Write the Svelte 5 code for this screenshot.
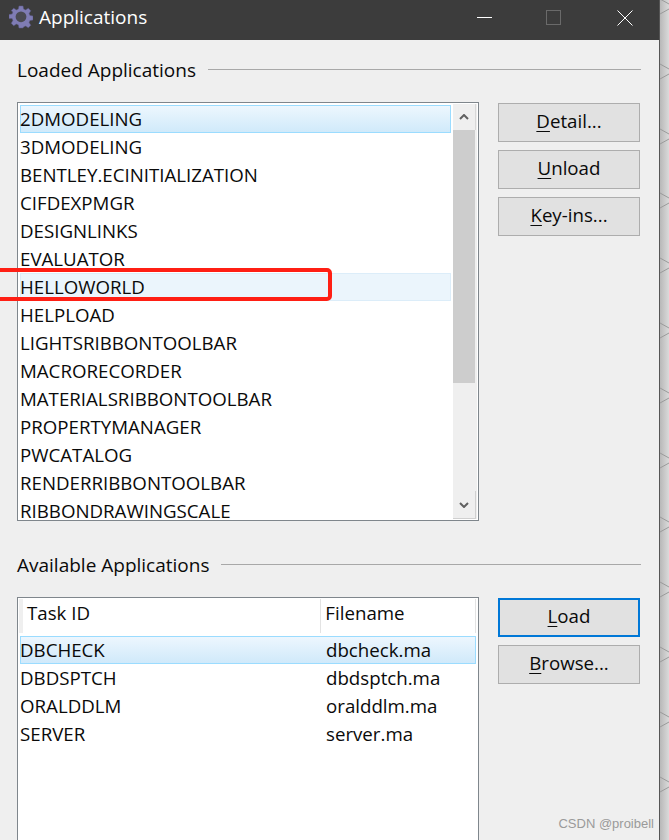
<script>
  // Applications dialog
  const loaded = [
    '2DMODELING', '3DMODELING', 'BENTLEY.ECINITIALIZATION', 'CIFDEXPMGR', 'DESIGNLINKS',
    'EVALUATOR', 'HELLOWORLD', 'HELPLOAD', 'LIGHTSRIBBONTOOLBAR', 'MACRORECORDER',
    'MATERIALSRIBBONTOOLBAR', 'PROPERTYMANAGER', 'PWCATALOG', 'RENDERRIBBONTOOLBAR',
    'RIBBONDRAWINGSCALE'
  ];
  const available = [
    ['DBCHECK', 'dbcheck.ma'],
    ['DBDSPTCH', 'dbdsptch.ma'],
    ['ORALDDLM', 'oralddlm.ma'],
    ['SERVER', 'server.ma']
  ];
  const selected = '2DMODELING';
  const hovered = 'HELLOWORLD';
  // wallpaper scratches on the strip right of the window
  const marks = Array.from({ length: 13 }, (_, i) => Math.round(-1 + i * 64.8));
</script>

<div class="screen">
  <div class="window">
    <header class="titlebar">
      <svg class="app-icon" viewBox="0 0 24 24" width="24" height="24">
        <path fill="#7f7cb4" stroke="#5d5a8a" stroke-width="0.5" d="M10 1h4l.6 3.100 2 .8L19.300 3.200l2.500 2.500-1.700 2.700.8 2 3.100.6v4l-3.100.6-.8 2 1.700 2.700-2.500 2.500-2.700-1.700-2 .8L14 23h-4l-.6-3.100-2-.8-2.700 1.700-2.500-2.500 1.700-2.700-.8-2L0 13.600v-4l3.100-.6.8-2L2.200 5.700l2.500-2.500 2.700 1.700 2-.8z"/>
        <circle cx="12" cy="11.800" r="5.400" fill="#4a4a52"/>
      </svg>
      <span class="title">Applications</span>
      <div class="controls">
        <svg viewBox="0 0 16 16" width="16" height="16"><path d="M0 7.500h15" stroke="#fff"/></svg>
        <svg class="max" viewBox="0 0 16 16" width="16" height="16"><rect x="0.500" y="0.500" width="14" height="14" fill="none" stroke="#6a6a6a"/></svg>
        <svg viewBox="0 0 16 16" width="16" height="16"><path d="M0.500 0.500l15 15M15.500 0.500l-15 15" stroke="#fff"/></svg>
      </div>
    </header>

    <section class="group first">
      <div class="legend"><span>Loaded Applications</span><i></i></div>
      <div class="content">
        <div class="box list-box">
          <ul class="list">
            {#each loaded as name}
              <li class:selected={name === selected} class:hovered={name === hovered}>{name}</li>
            {/each}
          </ul>
          <div class="scrollbar">
            <div class="arrow up">
              <svg viewBox="0 0 10 6" width="10" height="6"><path d="M1 5l4-4 4 4" fill="none" stroke="#606060" stroke-width="2"/></svg>
            </div>
            <div class="track"><div class="thumb"></div></div>
            <div class="arrow down">
              <svg viewBox="0 0 10 6" width="10" height="6"><path d="M1 1l4 4 4-4" fill="none" stroke="#606060" stroke-width="2"/></svg>
            </div>
          </div>
        </div>
        <div class="buttons">
          <button><u>D</u>etail...</button>
          <button><u>U</u>nload</button>
          <button><u>K</u>ey-ins...</button>
        </div>
      </div>
    </section>

    <section class="group second">
      <div class="legend"><span>Available Applications</span><i></i></div>
      <div class="content">
        <div class="box table-box">
          <div class="thead">
            <div class="th task">Task ID</div>
            <div class="th file">Filename</div>
          </div>
          {#each available as [id, file], i}
            <div class="tr" class:selected={i === 0}>
              <span class="td-id">{id}</span>
              <span class="td-file">{file}</span>
            </div>
          {/each}
        </div>
        <div class="buttons">
          <button class="default"><u>L</u>oad</button>
          <button><u>B</u>rowse...</button>
        </div>
      </div>
    </section>

    <div class="watermark">CSDN @proibell</div>
  </div>

  <div class="desktop">
    <svg width="9" height="840" viewBox="0 0 9 840">
      {#each marks as y}
        <path d="M0 {y}l9 5M0 {y + 15}l9-5" stroke="#9a9a9a" fill="none"/>
      {/each}
    </svg>
  </div>

  <div class="annotation"></div>
</div>

<style>
  :global(body) {
    margin: 0;
    background: #efefef;
  }

  .screen {
    position: relative;
    display: flex;
    width: 669px;
    height: 840px;
    overflow: hidden;
    font-family: "Open Sans", "Noto Sans", sans-serif;
    font-size: 18.7px;
    color: #0a0a0a;
  }

  .window {
    position: relative;
    width: 660px;
    height: 840px;
    flex: none;
    background: #efefef;
    border-right: 1px solid #555;
    box-sizing: border-box;
    overflow: hidden;
  }

  .desktop {
    width: 9px;
    flex: none;
    background: linear-gradient(90deg, #b8b8b8, #dadada);
  }

  .desktop svg {
    display: block;
  }

  .titlebar {
    display: flex;
    align-items: center;
    height: 40px;
    background: #3c3c3c;
    padding: 0 0 7px 9px;
    box-sizing: border-box;
  }

  .title {
    margin-left: 6px;
    color: #fff;
    font-size: 19px;
  }

  .controls {
    display: flex;
    align-self: flex-start;
    gap: 54px;
    margin-top: 10px;
    margin-left: auto;
    margin-right: 26px;
  }

  .controls svg {
    display: block;
  }

  .controls .max {
    margin-left: -1px;
    margin-right: 1px;
  }

  .group {
    padding: 0 18px 0 17px;
  }

  .first {
    padding-top: 16px;
  }

  .second {
    padding-top: 30px;
  }

  .legend {
    display: flex;
    align-items: center;
    gap: 12px;
    height: 27px;
    font-size: 19px;
  }

  .legend i {
    flex: 1;
    height: 1px;
    background: #a8a8a8;
  }

  .content {
    display: flex;
    align-items: flex-start;
    gap: 19px;
    margin-top: 19px;
  }

  .box {
    width: 462px;
    box-sizing: border-box;
    background: #fff;
    border: 1px solid #7f868c;
    flex: none;
  }

  .list-box {
    display: flex;
    height: 419px;
    padding: 2px 1px 1px 2px;
  }

  .list {
    list-style: none;
    margin: 0;
    padding: 0;
    width: 431px;
    flex: none;
  }

  .list li {
    height: 28px;
    line-height: 28px;
    box-sizing: border-box;
    white-space: nowrap;
  }

  .selected {
    background: linear-gradient(180deg, #eef7fe, #cfe9fa);
    box-shadow: inset 0 0 0 1px #9bdcff;
  }

  .hovered {
    background: #ebf5fc;
    box-shadow: inset 0 0 0 1px #dcedf9;
  }

  .scrollbar {
    display: flex;
    flex-direction: column;
    width: 24px;
    margin-left: 2px;
    margin-top: -1px;
    background: #efefef;
    flex: none;
  }

  .arrow {
    display: flex;
    align-items: center;
    justify-content: center;
    height: 26px;
    width: 22px;
    flex: none;
  }

  .arrow svg {
    display: block;
  }

  .arrow.up {
    border-right: 1px solid #d8d8d8;
  }

  .arrow.down {
    height: 28px;
    border-right: 1px solid #d0d0d0;
    border-bottom: 1px solid #d0d0d0;
    width: 23px;
    box-sizing: border-box;
  }

  .track {
    flex: 1;
    width: 22px;
  }

  .thumb {
    height: 253px;
    background: #cdcdcd;
  }

  .buttons {
    display: flex;
    flex-direction: column;
    gap: 8px;
    margin-top: 1px;
  }

  button {
    width: 142px;
    height: 39px;
    padding: 0 0 4px;
    box-sizing: border-box;
    background: #e1e1e1;
    border: 1px solid #adadad;
    font: inherit;
    color: inherit;
  }

  button.default {
    border: 2px solid #0078d7;
  }

  u {
    text-underline-offset: 3px;
    text-decoration-thickness: 1px;
  }

  .table-box {
    height: 260px;
    padding: 1px 2px;
  }

  .thead {
    display: flex;
    height: 34px;
    margin: 0 0 3px -1px;
  }

  .th {
    line-height: 28px;
    box-sizing: border-box;
  }

  .task {
    width: 303px;
    padding-left: 4px;
    border-left: 4px solid #efefef;
    border-right: 1px solid #e3e3e3;
  }

  .file {
    width: 155px;
    padding-left: 4px;
    border-right: 1px solid #e3e3e3;
  }

  .tr {
    display: flex;
    height: 28px;
    line-height: 28px;
    box-sizing: border-box;
  }

  .td-id {
    width: 306px;
  }

  .watermark {
    position: absolute;
    right: 5px;
    bottom: 9px;
    font-family: "Liberation Sans", sans-serif;
    font-size: 13px;
    color: #9a9a9a;
  }

  /* red box drawn over the screenshot */
  .annotation {
    position: absolute;
    left: -6px;
    top: 268px;
    width: 338px;
    height: 33px;
    box-sizing: border-box;
    border: 4px solid #ff1f14;
    border-radius: 5px;
  }
</style>
